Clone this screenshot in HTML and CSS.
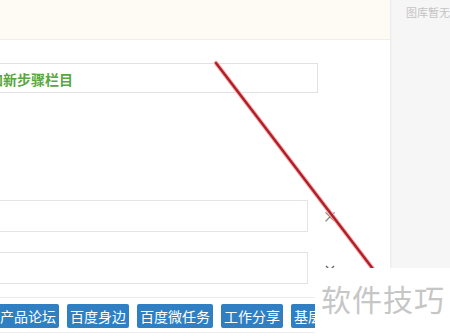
FILE: index.html
```html
<!DOCTYPE html>
<html lang="zh-CN">
<head>
    <meta charset="UTF-8">
    <meta name="viewport" content="width=device-width, initial-scale=1.0">
    <title>步骤编辑</title>
    <link rel="stylesheet" href="styles.css">
</head>
<body>
    <div class="page">
        <div class="main">
            <div class="notice"></div>
            <div class="content">
                <div class="step-title"><span>添加新步骤栏目</span></div>

                <div class="field first">
                    <div class="input"></div>
                    <span class="field-icon close">&times;</span>
                </div>
                <div class="field">
                    <div class="input"></div>
                    <span class="field-icon">
                        <svg width="10" height="6" viewBox="0 0 10 6"><path d="M1 1 L5 5 L9 1" fill="none" stroke="#666" stroke-width="1.4"/></svg>
                    </span>
                </div>

                <div class="tags">
                    <span class="tag first-tag">产品论坛</span>
                    <span class="tag">百度身边</span>
                    <span class="tag">百度微任务</span>
                    <span class="tag">工作分享</span>
                    <span class="tag">基层动态</span>
                </div>
            </div>
        </div>
        <div class="sidebar">
            <p class="sidebar-empty">图库暂无图片</p>
        </div>
    </div>

    <!-- annotation line drawn over the screenshot -->
    <svg class="mark" width="450" height="336" viewBox="0 0 450 336">
        <line x1="216" y1="63" x2="373" y2="269" stroke="#f3b0b0" stroke-width="4.5" stroke-linecap="round"/>
        <line x1="216" y1="63" x2="373" y2="269" stroke="#b21f28" stroke-width="2.4" stroke-linecap="round"/>
    </svg>

    <div class="watermark">软件技巧</div>
</body>
</html>
```

FILE: styles.css
```css
body {
    margin: 0;
    width: 450px;
    height: 336px;
    overflow: hidden;
    position: relative;
    font-family: "Noto Sans CJK SC", "Noto Sans", sans-serif;
    background-color: #fff;
}
.page {
    display: flex;
    height: 336px;
}
.main {
    width: 390px;
    background-color: #fff;
}
.notice {
    height: 39px;
    background-color: #fdfbf4;
    border-bottom: 1px solid #f1eee4;
}
.content {
    padding-top: 23px;
}
.step-title {
    width: 317px;
    height: 28px;
    border: 1px solid #e2e2e2;
    border-left: none;
    line-height: 28px;
    overflow: hidden;
    white-space: nowrap;
}
.step-title span {
    display: inline-block;
    margin-left: -25px;
    color: #5aa63f;
    font-size: 14px;
    font-weight: bold;
}
.field {
    display: flex;
    align-items: center;
    margin-top: 20px;
}
.field.first {
    margin-top: 107px;
}
.input {
    width: 307px;
    height: 30px;
    border: 1px solid #e4e4e4;
    border-left: none;
}
.field-icon {
    margin-left: 17px;
    width: 10px;
    display: flex;
    justify-content: center;
    color: #777;
    font-size: 15px;
    line-height: 1;
}
.field-icon.close {
    margin-top: -2px;
}
.tags {
    width: 315px;
    margin-top: 13px;
    padding: 6px 0 4px;
    border-top: 1px solid #ececec;
    border-bottom: 1px solid #ededed;
    display: flex;
    gap: 8px;
    white-space: nowrap;
    overflow: hidden;
}
.tag {
    flex: none;
    background-color: #2f7fc2;
    color: #fff;
    font-size: 14px;
    line-height: 24px;
    padding: 0 3px;
    border-radius: 2px;
}
.first-tag {
    margin-left: -3px;
}
.sidebar {
    flex: 1;
    background-color: #f6f6f6;
    box-shadow: inset 2px 0 2px -1px #e9e9e9;
    overflow: hidden;
}
.sidebar-empty {
    margin: 4px 0 0 16px;
    font-size: 11px;
    color: #c4c4c4;
    white-space: nowrap;
}
.mark {
    position: absolute;
    left: 0;
    top: 0;
}
.watermark {
    position: absolute;
    left: 315px;
    top: 268px;
    width: 135px;
    height: 68px;
    background-color: #fff;
    box-sizing: border-box;
    padding: 10px 0 0 6px;
    color: #c6c6c6;
    font-size: 30px;
    letter-spacing: 1px;
    line-height: 40px;
}
```
